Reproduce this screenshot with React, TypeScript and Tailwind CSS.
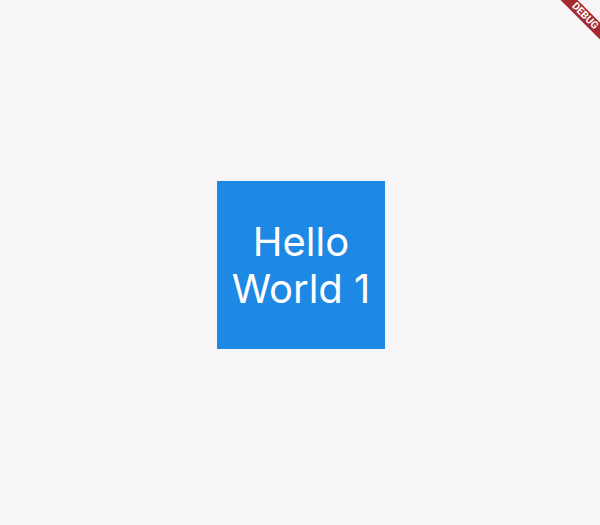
export default function App() {
  return (
    <div className="relative w-[600px] h-[525px] overflow-hidden bg-[#f7f5f8] flex items-center justify-center">
      <div className="mt-[4px] ml-[2px] w-[168px] h-[168px] bg-[#1e88e5] flex items-center justify-center">
        <div className="text-white text-[40px] leading-[47px] text-center" style={{ fontFamily: "Inter, sans-serif" }}>
          Hello
          <br />
          World 1
        </div>
      </div>
      <div className="absolute left-[545px] top-[10px] w-[80px] h-[12px] rotate-45 bg-[#a32b2f] flex items-center justify-center">
        <span className="text-white text-[10.2px] font-bold leading-none" style={{ fontFamily: "Roboto, sans-serif" }}>DEBUG</span>
      </div>
    </div>
  );
}
